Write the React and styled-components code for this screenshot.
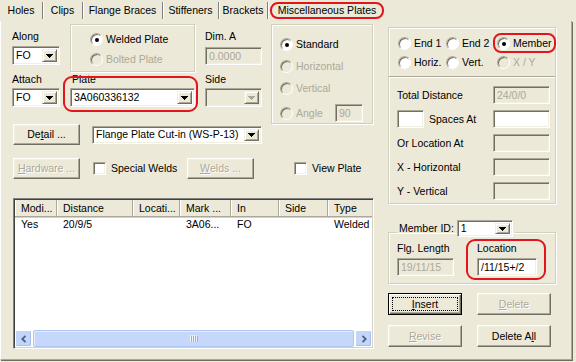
import React from "react";
import styled, { createGlobalStyle, css } from "styled-components";

const C = {
  face: "#ECE9D8",
  shadow: "#ACA899",
  dark: "#716F64",
  light: "#F1EFE2",
  disabled: "#ACA899",
  red: "#E2141C",
  etch: "#D0D0BF",
};

const GlobalStyle = createGlobalStyle`
  html, body { margin: 0; padding: 0; background: ${C.face}; }
  body {
    font-family: "Liberation Sans", Arial, sans-serif;
    font-size: 10.5px;
    line-height: 13px;
    color: #000;
    overflow: hidden;
  }
  * { box-sizing: border-box; }
`;

const redRing = (t, r, b, l, rad = 8) => css`
  position: relative;
  &::after {
    content: "";
    position: absolute;
    top: ${t}px;
    right: ${r}px;
    bottom: ${b}px;
    left: ${l}px;
    border: 2px solid ${C.red};
    border-radius: ${rad}px;
    pointer-events: none;
  }
`;

const Window = styled.div`
  width: 576px;
  height: 362px;
  overflow: hidden;
  background: ${C.face};
  display: flex;
  flex-direction: column;
`;

const TabStrip = styled.div`
  display: flex;
  align-items: center;
  height: 21px;
  flex: none;
`;

const Tab = styled.div`
  width: ${(p) => p.$w}px;
  height: 17px;
  flex: none;
  display: flex;
  align-items: center;
  justify-content: center;
  white-space: nowrap;
  border-right: 1px solid #808080;
  box-shadow: 1px 0 0 #fff;
  ${(p) =>
    p.$active &&
    css`
      margin-left: 2px;
      border: 2px solid ${C.red};
      border-radius: 8px;
      box-shadow: none;
    `}
`;

const Page = styled.div`
  flex: none;
  width: 572px;
  height: 339px;
  display: grid;
  grid-template-columns: 364px 168px;
  column-gap: 12px;
  align-items: start;
  padding: 3px 0 0 11px;
  border-left: 1px solid #fff;
  border-right: 1px solid ${C.shadow};
  border-bottom: 1px solid ${C.shadow};
  box-shadow: 1px 1px 0 ${C.dark};
`;

const LeftCol = styled.div`
  display: flex;
  flex-direction: column;
`;

const RightCol = styled.div`
  display: flex;
  flex-direction: column;
`;

const TopArea = styled.div`
  display: flex;
  height: 100px;
`;

const FormGrid = styled.div`
  display: grid;
  grid-template-columns: 48px 125px 57px;
  column-gap: 10px;
  grid-template-rows: 22px 19px 23px 19px;
  grid-template-areas:
    "alongL welded dimaL"
    "along welded dima"
    "attachL plate sideL"
    "attach plate side";
`;

const FieldLabel = styled.span`
  grid-area: ${(p) => p.$area || "auto"};
  align-self: ${(p) => p.$self || "end"};
  margin-bottom: ${(p) => (p.$mb != null ? p.$mb : 2)}px;
  padding-left: ${(p) => p.$pl || 0}px;
  white-space: nowrap;
  color: ${(p) => (p.$disabled ? C.disabled : "#000")};
`;

const sunken = css`
  border: 1px solid;
  border-color: ${C.shadow} #fff #fff ${C.shadow};
  box-shadow: inset 1px 1px 0 ${C.dark}, inset -1px -1px 0 ${C.light};
`;

const TextBox = styled.div`
  ${sunken};
  grid-area: ${(p) => p.$area || "auto"};
  align-self: ${(p) => p.$align || "auto"};
  flex: none;
  width: ${(p) => p.$w}px;
  height: ${(p) => p.$h || 18}px;
  margin-left: ${(p) => p.$ml || 0}px;
  padding-left: 3px;
  display: flex;
  align-items: center;
  white-space: nowrap;
  overflow: hidden;
  background: ${(p) => (p.$disabled ? C.face : "#fff")};
  color: ${(p) => (p.$disabled ? C.disabled : "#000")};
`;

const ComboBox = styled.div`
  ${sunken};
  grid-area: ${(p) => p.$area || "auto"};
  flex: none;
  width: ${(p) => (p.$w ? `${p.$w}px` : "auto")};
  height: ${(p) => p.$h || 19}px;
  margin-left: ${(p) => p.$ml || 0}px;
  padding: 2px;
  display: flex;
  align-items: stretch;
  background: ${(p) => (p.$disabled ? C.face : "#fff")};
`;

const ComboText = styled.span`
  flex: 1;
  min-width: 0;
  padding-left: 1px;
  display: flex;
  align-items: center;
  white-space: nowrap;
  overflow: hidden;
  color: ${(p) => (p.$disabled ? C.disabled : "#000")};
`;

const DropButton = styled.span`
  flex: none;
  width: 15px;
  background: ${C.face};
  border: 1px solid;
  border-color: ${C.light} ${C.dark} ${C.dark} ${C.light};
  box-shadow: inset 1px 1px 0 #fff, inset -1px -1px 0 ${C.shadow};
  display: flex;
  align-items: center;
  justify-content: center;
`;

const Arrow = ({ disabled }) => (
  <svg width="7" height="4" viewBox="0 0 7 4" shapeRendering="crispEdges">
    <path
      d="M0 0H7V1H6V2H5V3H4V4H3V3H2V2H1V1H0Z"
      fill={disabled ? C.disabled : "#000"}
    />
  </svg>
);

const Combo = ({ value, disabled, ...rest }) => (
  <ComboBox $disabled={disabled} {...rest}>
    <ComboText $disabled={disabled}>{value}</ComboText>
    <DropButton>
      <Arrow disabled={disabled} />
    </DropButton>
  </ComboBox>
);

const GroupBox = styled.div`
  border: 1px solid ${C.etch};
  box-shadow: inset 1px 1px 0 #fff, 1px 1px 0 #fff;
`;

const WeldedGroup = styled(GroupBox)`
  grid-area: welded;
  align-self: start;
  height: 48px;
  padding: 8px 0 0 19px;
  display: grid;
  grid-auto-rows: 13px;
  row-gap: 7px;
`;

const StandardGroup = styled(GroupBox)`
  flex: none;
  width: 102px;
  height: 100px;
  margin-left: 9px;
  padding: 13px 9px 0 8px;
  display: grid;
  grid-template-rows: 13px 13px 13px 18px;
  row-gap: 9px;
`;

const AngleRow = styled.div`
  display: flex;
  align-items: center;
  justify-content: space-between;
`;

const PlateCell = styled.div`
  grid-area: plate;
  display: flex;
  flex-direction: column;
  justify-content: flex-end;
  ${redRing(11, -3, -5, -7, 9)};
`;

const RadioItem = styled.label`
  display: inline-flex;
  align-items: center;
  gap: 3px;
  white-space: nowrap;
  color: ${(p) => (p.$disabled ? C.disabled : "#000")};
  ${(p) => p.$ring && redRing(-4, -4, -3, -4, 8)};
`;

const RadioDot = styled.span`
  flex: none;
  width: 13px;
  height: 13px;
  border-radius: 50%;
  position: relative;
  background: ${(p) => (p.$disabled ? C.face : "#fff")};
  border: 1px solid;
  border-color: ${C.shadow} #fff #fff ${C.shadow};
  box-shadow: inset 1px 1px 0 ${C.dark};
  ${(p) =>
    p.$checked &&
    css`
      &::after {
        content: "";
        position: absolute;
        left: 3.5px;
        top: 3.5px;
        width: 4px;
        height: 4px;
        border-radius: 50%;
        background: #000;
      }
    `}
`;

const Radio = ({ label, checked, disabled, ring }) => (
  <RadioItem $disabled={disabled} $ring={ring}>
    <RadioDot $checked={checked} $disabled={disabled} />
    <span>{label}</span>
  </RadioItem>
);

const CheckItem = styled.label`
  display: inline-flex;
  align-items: center;
  gap: 5px;
  flex: none;
  width: ${(p) => (p.$w ? `${p.$w}px` : "auto")};
  margin-left: ${(p) => p.$ml || 0}px;
  white-space: nowrap;
`;

const CheckBox = styled.span`
  flex: none;
  width: 13px;
  height: 13px;
  background: #fff;
  ${sunken};
`;

const Button = styled.button`
  font: inherit;
  flex: none;
  width: ${(p) => p.$w || 67}px;
  height: ${(p) => p.$h || 21}px;
  margin-left: ${(p) => p.$ml || 0}px;
  padding: 0;
  position: relative;
  display: flex;
  align-items: center;
  justify-content: center;
  background: ${C.face};
  color: #000;
  border: 1px solid;
  border-color: #fff ${C.dark} ${C.dark} #fff;
  box-shadow: inset -1px -1px 0 ${C.shadow}, inset 1px 1px 0 ${C.light};
  &:disabled {
    color: ${C.disabled};
    text-shadow: 1px 1px 0 #fff;
  }
  ${(p) =>
    p.$default &&
    css`
      border-color: #000;
      box-shadow: inset 1px 1px 0 #fff, inset -1px -1px 0 ${C.dark},
        inset -2px -2px 0 ${C.shadow};
      &::after {
        content: "";
        position: absolute;
        top: 3px;
        left: 3px;
        right: 3px;
        bottom: 3px;
        border: 1px dotted #000;
      }
    `}
`;

const ButtonRow = styled.div`
  display: flex;
  align-items: center;
  height: 21px;
  padding-left: 1px;
  margin-top: ${(p) => p.$mt || 0}px;
`;

/* ---------- list view ---------- */

const ListView = styled.div`
  margin: 19px 0 0 1px;
  width: 361px;
  height: 151px;
  display: flex;
  flex-direction: column;
  background: #fff;
  border: 1px solid;
  border-color: #808080 #fff #fff #808080;
  padding: 1px;
  box-shadow: inset 1px 1px 0 #404040, inset -1px -1px 0 #D4D0C8;
  overflow: hidden;
`;

const HeaderRow = styled.div`
  display: flex;
  flex: none;
  height: 17px;
  background: ${C.face};
  border-bottom: 1px solid ${C.shadow};
  box-shadow: 0 1px 0 #D6D2C2;
`;

const HeaderCell = styled.div`
  flex: none;
  width: ${(p) => p.$w}px;
  padding-left: 6px;
  display: flex;
  align-items: center;
  white-space: nowrap;
  overflow: hidden;
  border-right: 1px solid ${C.shadow};
  box-shadow: inset 1px 0 0 #fff;
`;

const DataRow = styled.div`
  display: flex;
  flex: none;
  height: 14px;
  margin-top: 1px;
`;

const DataCell = styled.div`
  flex: none;
  width: ${(p) => p.$w}px;
  padding-left: 6px;
  white-space: nowrap;
  overflow: hidden;
`;

const ScrollBar = styled.div`
  margin-top: auto;
  flex: none;
  height: 17px;
  display: flex;
  gap: 1px;
  padding: 0;
  background: #FEFEFB;
`;

const ScrollBtn = styled.div`
  flex: none;
  width: 17px;
  border: 1px solid #fff;
  border-radius: 2px;
  background: #C4D5FA;
  box-shadow: inset -1px -1px 0 #A9BEEC;
  display: flex;
  align-items: center;
  justify-content: center;
`;

const ScrollThumb = styled.div`
  flex: 1;
  border: 1px solid #B2C6F2;
  border-radius: 2px;
  background: #C6D7FC;
  box-shadow: inset 1px 1px 0 #E3EBFE;
  display: flex;
  align-items: center;
  justify-content: center;
`;

const Chevron = ({ dir }) => (
  <svg width="6" height="8" viewBox="0 0 6 8">
    <path
      d={dir === "left" ? "M4.5 0.8L1.3 4L4.5 7.2" : "M1.5 0.8L4.7 4L1.5 7.2"}
      fill="none"
      stroke="#4D6185"
      strokeWidth="1.8"
    />
  </svg>
);

const Grip = () => (
  <svg width="8" height="7" viewBox="0 0 8 7" shapeRendering="crispEdges">
    {[0, 2, 4, 6].map((x) => (
      <rect key={x} x={x} y="0" width="1" height="7" fill="#EEF3FE" />
    ))}
    {[1, 3, 5, 7].map((x) => (
      <rect key={x} x={x} y="1" width="1" height="6" fill="#8CB0F8" />
    ))}
  </svg>
);

/* ---------- right column ---------- */

const TargetGroup = styled(GroupBox)`
  margin-top: 3px;
  height: 177px;
  padding: 9px 5px 3px 8px;
  display: flex;
  flex-direction: column;
`;

const RadioGrid = styled.div`
  display: grid;
  grid-template-columns: 48px 51px 1fr;
  grid-auto-rows: 13px;
  row-gap: 6px;
  padding-left: 1px;
`;

const Separator = styled.div`
  margin: 7px -5px 8px -8px;
  height: 2px;
  border-top: 1px solid ${C.shadow};
  border-bottom: 1px solid #fff;
`;

const FieldGrid = styled.div`
  display: grid;
  grid-template-columns: 1fr 57px;
  grid-auto-rows: 18px;
  row-gap: 6px;
  align-items: center;
`;

const InlineField = styled.div`
  display: flex;
  align-items: center;
  gap: 5px;
  white-space: nowrap;
`;

const MemberGroup = styled.fieldset`
  margin: 16px 0 0 0;
  padding: 0 5px 7px 8px;
  min-width: 0;
  border: 1px solid ${C.etch};
  box-shadow: inset 1px 1px 0 #fff, 1px 1px 0 #fff;
`;

const Legend = styled.legend`
  padding: 0 2px 7px 2px;
  display: flex;
  align-items: center;
  gap: 3px;
  white-space: nowrap;
`;

const MemberRow = styled.div`
  display: flex;
  margin-top: -2px;
`;

const MemberCol = styled.div`
  display: flex;
  flex-direction: column;
  gap: 3px;
  margin-left: ${(p) => p.$ml || 0}px;
  ${(p) => p.$ring && redRing(-3, -9, -4, -11, 9)};
`;

const ButtonGrid = styled.div`
  margin-top: 9px;
  display: grid;
  grid-template-columns: 74px 74px;
  grid-auto-rows: 22px;
  column-gap: 15px;
  row-gap: 10px;
`;

const tabs = [
  { label: "Holes", w: 43 },
  { label: "Clips", w: 40 },
  { label: "Flange Braces", w: 80 },
  { label: "Stiffeners", w: 56 },
  { label: "Brackets", w: 49 },
  { label: "Miscellaneous Plates", w: 114, active: true },
];

const columns = [
  { h: "Modi...", w: 42, v: "Yes" },
  { h: "Distance", w: 76, v: "20/9/5" },
  { h: "Locati...", w: 47, v: "" },
  { h: "Mark ...", w: 51, v: "3A06..." },
  { h: "In", w: 48, v: "FO" },
  { h: "Side", w: 49, v: "" },
  { h: "Type", w: 60, v: "Welded" },
];

export default function App() {
  return (
    <>
      <GlobalStyle />
      <Window>
        <TabStrip>
          {tabs.map((t) => (
            <Tab key={t.label} $w={t.w} $active={t.active}>
              {t.label}
            </Tab>
          ))}
        </TabStrip>

        <Page>
          <LeftCol>
            <TopArea>
              <FormGrid>
                <FieldLabel $area="alongL" $mb={3}>Along</FieldLabel>
                <Combo $area="along" $w={48} value="FO" />

                <WeldedGroup>
                  <Radio label="Welded Plate" checked />
                  <Radio label="Bolted Plate" disabled />
                </WeldedGroup>

                <FieldLabel $area="dimaL" $mb={3}>Dim. A</FieldLabel>
                <TextBox $area="dima" $w={57} $h={18} $align="end" $disabled>
                  0.0000
                </TextBox>

                <FieldLabel $area="attachL">Attach</FieldLabel>
                <Combo $area="attach" $w={48} value="FO" />

                <PlateCell>
                  <FieldLabel $self="flex-start" $pl={2}>Plate</FieldLabel>
                  <Combo $w={125} value="3A060336132" />
                </PlateCell>

                <FieldLabel $area="sideL">Side</FieldLabel>
                <Combo $area="side" $w={57} value="" disabled />
              </FormGrid>

              <StandardGroup>
                <Radio label="Standard" checked />
                <Radio label="Horizontal" disabled />
                <Radio label="Vertical" disabled />
                <AngleRow>
                  <Radio label="Angle" disabled />
                  <TextBox $w={28} $h={18} $disabled>90</TextBox>
                </AngleRow>
              </StandardGroup>
            </TopArea>

            <ButtonRow>
              <Button>
                De<u>t</u>ail ...
              </Button>
              <Combo $ml={12} $w={170} $h={18} value="Flange Plate Cut-in (WS-P-13)" />
            </ButtonRow>

            <ButtonRow $mt={13}>
              <Button disabled>
                <u>H</u>ardware ...
              </Button>
              <CheckItem $ml={13} $w={94}>
                <CheckBox />
                <span>Special Welds</span>
              </CheckItem>
              <Button disabled>
                <u>W</u>elds ...
              </Button>
              <CheckItem $ml={40}>
                <CheckBox />
                <span>View Plate</span>
              </CheckItem>
            </ButtonRow>

            <ListView>
              <HeaderRow>
                {columns.map((c) => (
                  <HeaderCell key={c.h} $w={c.w}>
                    {c.h}
                  </HeaderCell>
                ))}
              </HeaderRow>
              <DataRow>
                {columns.map((c) => (
                  <DataCell key={c.h} $w={c.w}>
                    {c.v}
                  </DataCell>
                ))}
              </DataRow>
              <ScrollBar>
                <ScrollBtn>
                  <Chevron dir="left" />
                </ScrollBtn>
                <ScrollThumb>
                  <Grip />
                </ScrollThumb>
                <ScrollBtn>
                  <Chevron dir="right" />
                </ScrollBtn>
              </ScrollBar>
            </ListView>
          </LeftCol>

          <RightCol>
            <TargetGroup>
              <RadioGrid>
                <Radio label="End 1" />
                <Radio label="End 2" />
                <Radio label="Member" checked ring />
                <Radio label="Horiz." />
                <Radio label="Vert." />
                <Radio label="X / Y" disabled />
              </RadioGrid>
              <Separator />
              <FieldGrid>
                <span>Total Distance</span>
                <TextBox $w={57} $disabled>24/0/0</TextBox>
                <InlineField>
                  <TextBox $w={27} />
                  <span>Spaces At</span>
                </InlineField>
                <TextBox $w={57} />
                <span>Or Location At</span>
                <TextBox $w={57} $disabled />
                <span>X - Horizontal</span>
                <TextBox $w={57} $disabled />
                <span>Y - Vertical</span>
                <TextBox $w={57} $disabled />
              </FieldGrid>
            </TargetGroup>

            <MemberGroup>
              <Legend>
                <span>Member ID:</span>
                <Combo $w={56} $h={17} value="1" />
              </Legend>
              <MemberRow>
                <MemberCol>
                  <span>Flg. Length</span>
                  <TextBox $w={57} $disabled>19/11/15</TextBox>
                </MemberCol>
                <MemberCol $ml={23} $ring>
                  <span>Location</span>
                  <TextBox $w={60}>/11/15+/2</TextBox>
                </MemberCol>
              </MemberRow>
            </MemberGroup>

            <ButtonGrid>
              <Button $w={74} $h={22} $default>
                <u>I</u>nsert
              </Button>
              <Button $w={74} $h={22} disabled>
                <u>D</u>elete
              </Button>
              <Button $w={74} $h={22} disabled>
                <u>R</u>evise
              </Button>
              <Button $w={74} $h={22}>
                Delete A<u>l</u>l
              </Button>
            </ButtonGrid>
          </RightCol>
        </Page>
      </Window>
    </>
  );
}
